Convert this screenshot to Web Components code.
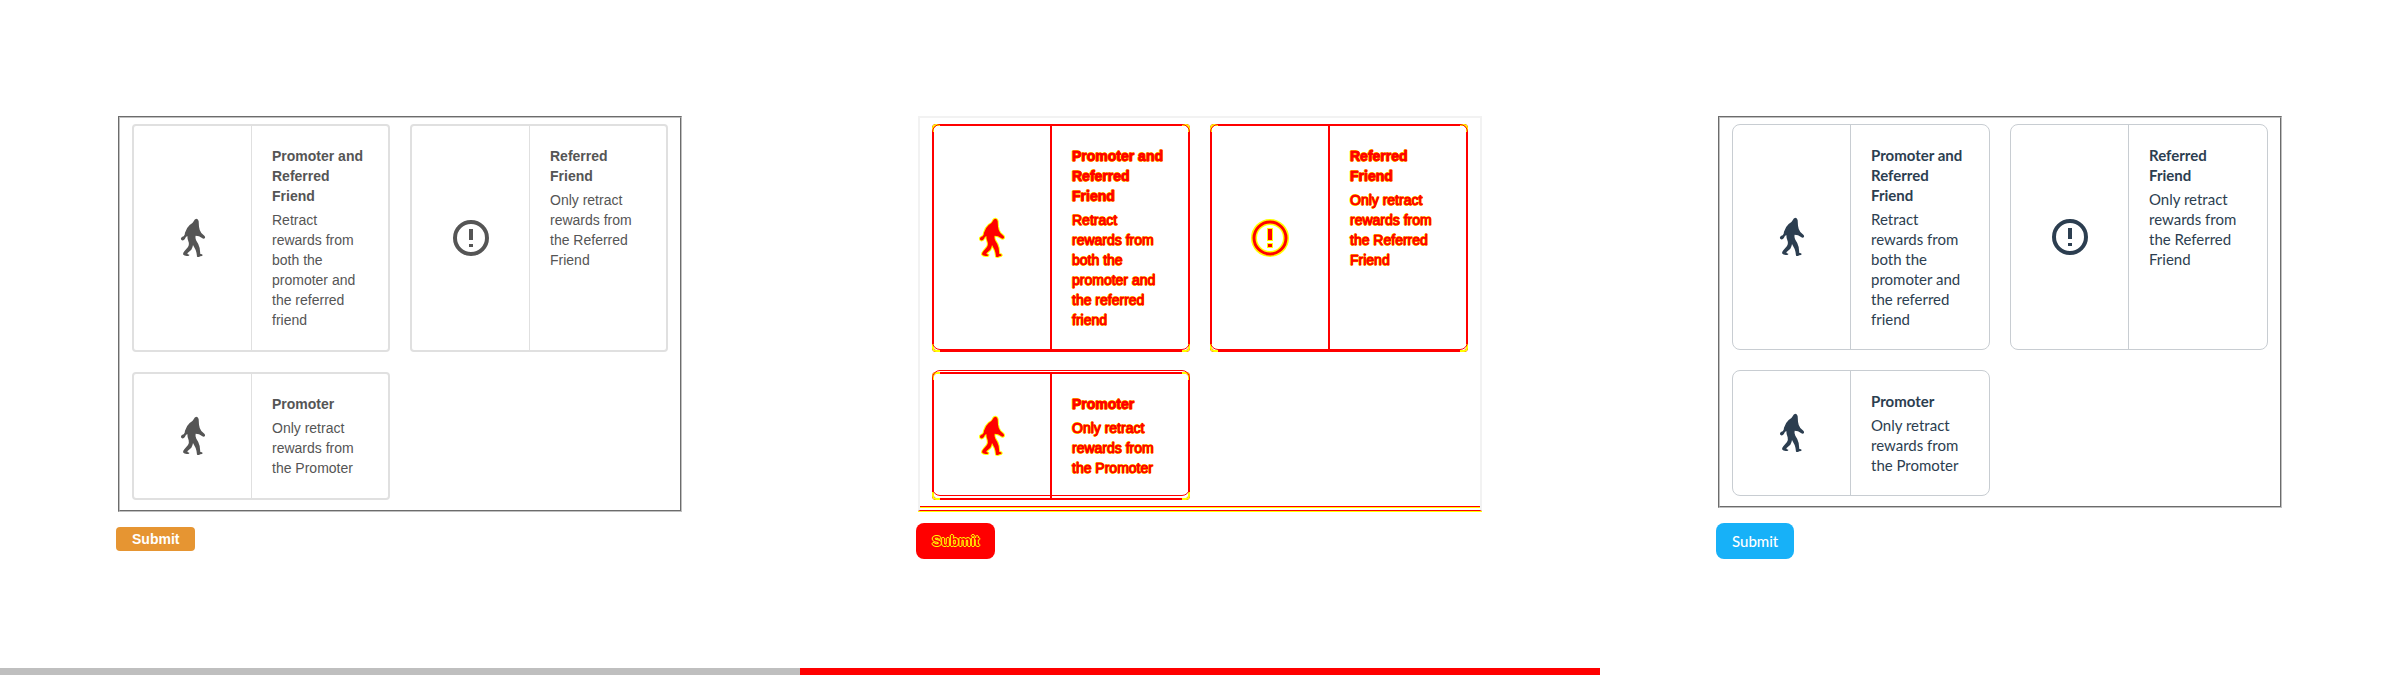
<!DOCTYPE html>
<html lang="en">
<head>
<meta charset="utf-8">
<title>Retract rewards – visual comparison</title>
<style>
  body { margin: 0; background: #fff; font-family: "Liberation Sans", Arial, sans-serif; }
</style>
</head>
<body>
<visual-compare>
  <form-pane theme="before"></form-pane>
  <form-pane theme="diff"></form-pane>
  <form-pane theme="after"></form-pane>
</visual-compare>
<script>
const define = (name, html) => {
  const template = document.createElement('template');
  template.innerHTML = html;
  customElements.define(name, class extends HTMLElement {
    constructor() {
      super();
      this.attachShadow({ mode: 'open' }).append(template.content.cloneNode(true));
    }
  });
};

define('bigfoot-icon', `
<style>
  :host { display: block; width: 24px; height: 38px; }
  svg { display: block; width: 100%; height: 100%; overflow: visible; }
  path { fill: currentColor; stroke: var(--halo, none); stroke-width: 6; paint-order: stroke; stroke-linejoin: round; }
</style>
<svg viewBox="93 87 72 114" aria-hidden="true">
  <path d="M139 86Q145 87 146 94L147 110Q148 120 154 129L163 137Q166 140 165 144Q161 149 156 144L147 139Q141 137 137 137Q135 144 139 152Q147 163 149 174L151 192Q158 192 158 196Q157 199 151 199Q147 202 141 200Q140 188 137 180L129 165Q128 173 124 179L112 190Q112 194 118 194Q119 198 113 198Q103 199 99 193Q99 188 103 184L114 171Q118 164 116 157Q112 148 112 138Q107 140 105 146Q102 152 96 151Q92 149 93 144Q97 140 101 139Q105 134 105 128Q109 114 119 105Q128 101 131 94Q134 86 139 86Z"/>
</svg>`);

define('alert-icon', `
<style>
  :host { display: block; width: 36px; height: 36px; }
  svg { display: block; width: 100%; height: 100%; overflow: visible; }
  .halo { fill: none; stroke: var(--halo, none); stroke-width: 6; }
  .ring { fill: none; stroke: currentColor; stroke-width: var(--ring, 4); }
  .mark { fill: currentColor; stroke: var(--halo, none); stroke-width: 2; paint-order: stroke; }
</style>
<svg viewBox="0 0 36 36" aria-hidden="true">
  <circle class="halo" cx="18" cy="18" r="16"/>
  <circle class="ring" cx="18" cy="18" r="16"/>
  <path class="mark" d="M16 9H20V20H16ZM16 24H20V27H16Z"/>
</svg>`);

define('option-card', `
<style>
  :host {
    display: grid; grid-template-columns: 118px 1fr; position: relative;
    box-sizing: border-box; border: var(--card-border); border-radius: var(--card-radius);
  }
  .icon { display: grid; place-items: center; border-right: var(--divider); }
  .text { padding: 20px 18px 20px 20px; }
  ::slotted(*) { margin: 0; font-size: var(--text-size); line-height: 20px; }
  ::slotted(h3) { font-weight: 700; padding-bottom: 4px; }
  .ghost, .corners { display: var(--overlay, none); position: absolute; box-sizing: border-box; }
  .ghost { inset: var(--ghost-inset, -2px -2px 0); border: 1px solid #f00; border-radius: 8px; }
  .corners {
    inset: -2px; border: 2px solid #ff0; border-radius: 4px;
    --c: linear-gradient(#000, #000) no-repeat;
    mask: var(--c) 0 0 / 8px 8px, var(--c) 100% 0 / 8px 8px, var(--c) 0 100% / 8px 8px, var(--c) 100% 100% / 8px 8px;
  }
</style>
<div class="icon"><slot name="icon"></slot></div>
<div class="text"><slot></slot></div>
<div class="corners"></div>
<div class="ghost"></div>`);

define('submit-button', `
<style>
  :host { display: block; }
  button {
    display: block; margin: 0; border: 0; padding: var(--button-padding);
    font: inherit; font-size: var(--text-size); font-weight: var(--button-weight); line-height: 20px;
    color: var(--button-text); background: var(--button-fill); border-radius: var(--button-radius);
    text-shadow: var(--button-shadow, none);
  }
</style>
<button type="button"><slot></slot></button>`);

define('form-pane', `
<style>
  :host {
    display: flex; flex-direction: column; box-sizing: border-box;
    padding: 116px 116px 0; border-bottom: 7px solid transparent; --text-size: 14px;
  }
  :host([theme="before"]) {
    border-color: #bfbfbf; color: #555;
    --card-border: 2px solid #e0e0e0; --card-radius: 4px; --divider: 1px solid #e0e0e0;
    --button-padding: 2px 16px; --button-weight: 700; --button-text: #fff;
    --button-fill: #e69532; --button-radius: 4px; --button-gap: 15px;
  }
  :host([theme="after"]) {
    color: #2c3e50; font-family: Lato, sans-serif; --text-size: 15px;
    --card-border: 1px solid #c8cdd2; --card-radius: 8px; --divider: 1px solid #c8cdd2;
    --button-padding: 8px 16px; --button-weight: 500; --button-text: #fff;
    --button-fill: #17b1f8; --button-radius: 8px; --button-gap: 15px;
  }
  :host([theme="diff"]) {
    border-color: #f00; color: #f00;
    --card-border: 2px solid #f00; --card-radius: 4px; --divider: 2px solid #f00;
    --button-padding: 8px 16px; --button-weight: 700; --button-text: #f00;
    --button-fill: #f00; --button-radius: 8px; --button-gap: 11px;
    --button-shadow: 1px 0 #ff0, -1px 0 #ff0, 0 1px #ff0, 0 -1px #ff0;
    --halo: #ff0; --ring: 3; --overlay: block;
  }
  fieldset {
    display: grid; grid-template-columns: 1fr 1fr; gap: 20px; position: relative;
    margin: 0 2px; min-width: 0; padding: 6px 12px 10px; border: 2px groove #c0c0c0;
  }
  :host([theme="diff"]) fieldset {
    border: 2px solid #f2f2f2; border-bottom: 1px solid #f00;
    margin-bottom: 1px; box-shadow: 0 1px #ff0;
  }
  :host([theme="diff"]) fieldset::after {
    content: ""; position: absolute; inset: auto 0 2px; height: 1px;
    background: #f00; border-bottom: 1px solid #ff0;
  }
  :host([theme="diff"]) :is(h3, p) {
    -webkit-text-stroke: 1px #f00;
    text-shadow: 1px 0 #ff0, -1px 0 #ff0, 0 1px #ff0, 0 -1px #ff0;
  }
  .last { --ghost-inset: -4px -2px 2px; }
  submit-button { margin-top: var(--button-gap); align-self: flex-start; }
</style>
<fieldset>
  <option-card>
    <bigfoot-icon slot="icon"></bigfoot-icon>
    <h3>Promoter and Referred Friend</h3>
    <p>Retract rewards from both the promoter and the referred friend</p>
  </option-card>
  <option-card>
    <alert-icon slot="icon"></alert-icon>
    <h3>Referred Friend</h3>
    <p>Only retract rewards from the Referred Friend</p>
  </option-card>
  <option-card class="last">
    <bigfoot-icon slot="icon"></bigfoot-icon>
    <h3>Promoter</h3>
    <p>Only retract rewards from the Promoter</p>
  </option-card>
</fieldset>
<submit-button>Submit</submit-button>`);

define('visual-compare', `
<style>
  :host { display: grid; grid-template-columns: repeat(3, 1fr); min-height: 100vh; }
</style>
<slot></slot>`);
</script>
</body>
</html>
